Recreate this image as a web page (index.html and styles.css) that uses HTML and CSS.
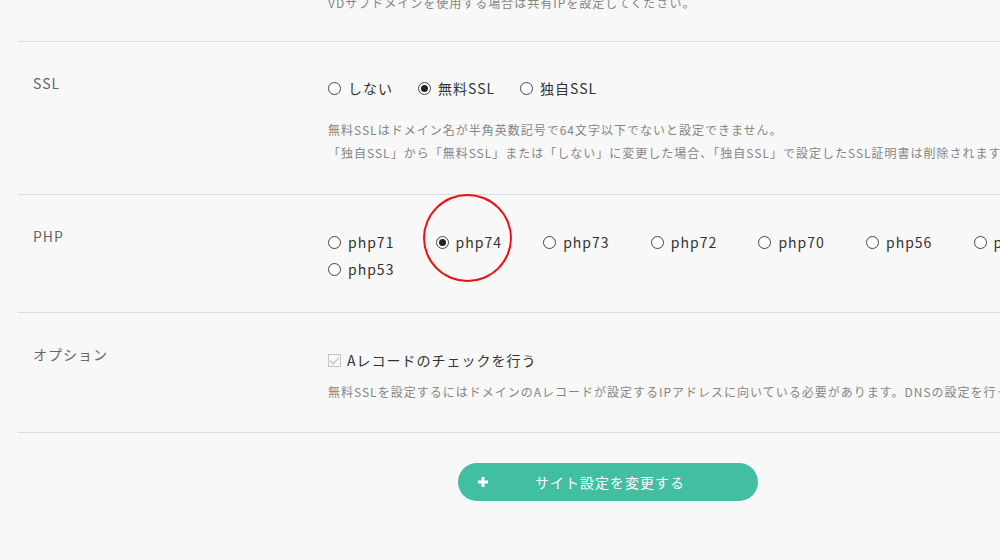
FILE: index.html
```html
<!DOCTYPE html>
<html lang="ja">
<head>
    <meta charset="UTF-8">
    <meta name="viewport" content="width=device-width, initial-scale=1.0">
    <title>サイト設定</title>
    <link rel="stylesheet" href="styles.css">
</head>
<body>
    <div class="settings">
        <div class="row row-top">
            <div class="row-label"></div>
            <div class="row-body">
                <p class="note note-cut">VDサブドメインを使用する場合は共有IPを設定してください。</p>
            </div>
        </div>

        <div class="row row-ssl">
            <div class="row-label">SSL</div>
            <div class="row-body">
                <div class="choices choices-ssl">
                    <label class="choice"><input type="radio" name="ssl"><span>しない</span></label>
                    <label class="choice"><input type="radio" name="ssl" checked><span>無料SSL</span></label>
                    <label class="choice"><input type="radio" name="ssl"><span>独自SSL</span></label>
                </div>
                <p class="note">無料SSLはドメイン名が半角英数記号で64文字以下でないと設定できません。<br>「独自SSL」から「無料SSL」または「しない」に変更した場合、「独自SSL」で設定したSSL証明書は削除されます。</p>
            </div>
        </div>

        <div class="row">
            <div class="row-label">PHP</div>
            <div class="row-body">
                <div class="choices choices-php">
                    <label class="choice"><input type="radio" name="php"><span>php71</span></label>
                    <label class="choice choice-marked"><input type="radio" name="php" checked><span>php74</span></label>
                    <label class="choice"><input type="radio" name="php"><span>php73</span></label>
                    <label class="choice"><input type="radio" name="php"><span>php72</span></label>
                    <label class="choice"><input type="radio" name="php"><span>php70</span></label>
                    <label class="choice"><input type="radio" name="php"><span>php56</span></label>
                    <label class="choice"><input type="radio" name="php"><span>php55</span></label>
                    <label class="choice"><input type="radio" name="php"><span>php53</span></label>
                </div>
            </div>
        </div>

        <div class="row">
            <div class="row-label">オプション</div>
            <div class="row-body">
                <label class="check"><input type="checkbox" checked disabled><span>Aレコードのチェックを行う</span></label>
                <p class="note">無料SSLを設定するにはドメインのAレコードが設定するIPアドレスに向いている必要があります。DNSの設定を行ってから設定してください。</p>
            </div>
        </div>

        <div class="actions">
            <button class="submit">
                <svg class="submit-icon" width="10" height="10" viewBox="0 0 10 10"><path d="M5 0v10M0 5h10" stroke="#fff" stroke-width="3"/></svg>
                <span>サイト設定を変更する</span>
            </button>
        </div>
    </div>
</body>
</html>
```

FILE: styles.css
```css
:root {
    --bg: #f8f8f8;
    --line: #dddddd;
    --label: #666666;
    --text: #333333;
    --note: #858585;
    --accent: #42bea3;
}

body {
    margin: 0;
    background-color: var(--bg);
    font-family: "Noto Sans CJK JP", "Noto Sans", sans-serif;
    color: var(--text);
    overflow: hidden;
}

.settings {
    margin-left: 18px;
}

.row {
    display: grid;
    grid-template-columns: 310px 1fr;
    border-bottom: 1px solid var(--line);
    padding: 31px 0 29px;
}

.row-top {
    height: 42px;
    padding: 0;
    box-sizing: border-box;
    overflow: hidden;
}

.row-ssl {
    padding-bottom: 30px;
}

.row-label {
    padding-left: 15px;
    font-size: 14px;
    line-height: 20px;
    color: var(--label);
    letter-spacing: 1px;
    white-space: nowrap;
}

.row-body {
    white-space: nowrap;
}

.note {
    margin: 0;
    font-size: 12px;
    line-height: 23px;
    color: var(--note);
    letter-spacing: 1px;
}

.note-cut {
    margin-top: -9px;
}

.choices {
    display: flex;
    flex-wrap: wrap;
    font-size: 14px;
}

.choices-ssl {
    margin-top: 5px;
    margin-bottom: 20px;
    line-height: 20px;
}

.choices-ssl .choice {
    margin-right: 25px;
}

.choices-php {
    width: 760px;
    margin-top: 3px;
    line-height: 27px;
}

.choices-php .choice {
    width: 107.6px;
}

.choice,
.check {
    display: inline-flex;
    align-items: center;
    letter-spacing: 1px;
}

.choice-marked {
    position: relative;
}

.choice-marked::after {
    content: "";
    position: absolute;
    left: -13px;
    top: -35px;
    width: 89px;
    height: 88px;
    border: 2px solid #ee1111;
    border-radius: 50%;
    box-sizing: border-box;
}

input[type="radio"] {
    appearance: none;
    margin: 0 7px 0 0;
    width: 13px;
    height: 13px;
    border: 1px solid #444;
    border-radius: 50%;
    background: #fff;
    display: grid;
    place-items: center;
}

input[type="radio"]:checked::before {
    content: "";
    width: 7px;
    height: 7px;
    border-radius: 50%;
    background: #222;
}

.check {
    font-size: 14px;
    line-height: 20px;
    margin-top: 6px;
    margin-bottom: 10px;
}

input[type="checkbox"] {
    appearance: none;
    margin: 0 6px 0 0;
    width: 13px;
    height: 13px;
    border: 1px solid #c4c4c4;
    background: #fafafa;
    position: relative;
}

input[type="checkbox"]:checked::before {
    content: "";
    position: absolute;
    left: 3px;
    top: 0px;
    width: 4px;
    height: 8px;
    border: solid #b0b0b0;
    border-width: 0 1.5px 1.5px 0;
    transform: rotate(45deg);
}

.actions {
    padding: 30px 0 0 440px;
}

.submit {
    display: flex;
    align-items: center;
    width: 300px;
    height: 38px;
    padding: 0 20px;
    border: none;
    border-radius: 19px;
    background-color: var(--accent);
    color: #fff;
    font-family: inherit;
    font-size: 14px;
    cursor: pointer;
}

.submit-icon {
    flex: none;
}

.submit span {
    flex: 1;
    text-align: center;
    padding-right: 6px;
    letter-spacing: 1px;
}
```
